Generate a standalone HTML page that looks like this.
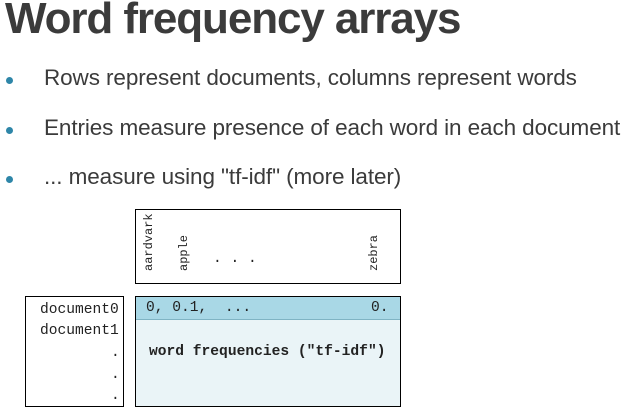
<!DOCTYPE html>
<html><head><style>
body{margin:0;width:635px;height:410px;background:#fff;position:relative;overflow:hidden;font-family:"Liberation Sans",sans-serif;color:#3a3a3a}
.t{position:absolute;left:5px;top:-6px;font-size:44px;font-weight:bold;letter-spacing:-1.1px;white-space:nowrap;color:#3b3b3b}
.b{position:absolute;left:44px;font-size:22.5px;white-space:nowrap;letter-spacing:-0.1px;color:#3b3b3b}
.d{position:absolute;left:6px;width:7px;height:7px;border-radius:50%;background:#2e86a8}
.box{position:absolute;border:1px solid #000;box-sizing:border-box}
.m{font-family:"Liberation Mono",monospace;font-size:14.6px;color:#222;position:absolute;white-space:pre}
.v{transform:rotate(-90deg);transform-origin:left top;font-size:12px}
</style></head><body>
<div class="t">Word frequency arrays</div>
<div class="d" style="top:77px"></div><div class="b" style="top:65px">Rows represent documents, columns represent words</div>
<div class="d" style="top:127px"></div><div class="b" style="top:115px">Entries measure presence of each word in each document</div>
<div class="d" style="top:176px"></div><div class="b" style="top:164px">... measure using "tf-idf" (more later)</div>
<div class="box" style="left:135px;top:209px;width:266px;height:75px"></div>
<div class="m v" style="left:142px;top:271px">aardvark</div>
<div class="m v" style="left:177px;top:271px">apple</div>
<div class="m" style="left:213px;top:251px">. . .</div>
<div class="m v" style="left:367px;top:271px">zebra</div>
<div class="box" style="left:25px;top:296px;width:99px;height:111px"></div>
<div class="m" style="left:40px;top:302px">document0</div>
<div class="m" style="left:40px;top:323px">document1</div>
<div class="m" style="left:111px;top:345px">.</div>
<div class="m" style="left:111px;top:367px">.</div>
<div class="m" style="left:111px;top:388px">.</div>
<div class="box" style="left:135px;top:296px;width:266px;height:111px;background:#eaf4f7"></div>
<div style="position:absolute;left:136px;top:297px;width:264px;height:22px;background:#a9d8e6;border-bottom:1px solid #7fb4c4"></div>
<div class="m" style="left:146px;top:300px">0, 0.1,  ...</div>
<div class="m" style="left:371px;top:300px">0.</div>
<div class="m" style="left:149px;top:344px;font-weight:bold">word frequencies ("tf-idf")</div>
</body></html>
